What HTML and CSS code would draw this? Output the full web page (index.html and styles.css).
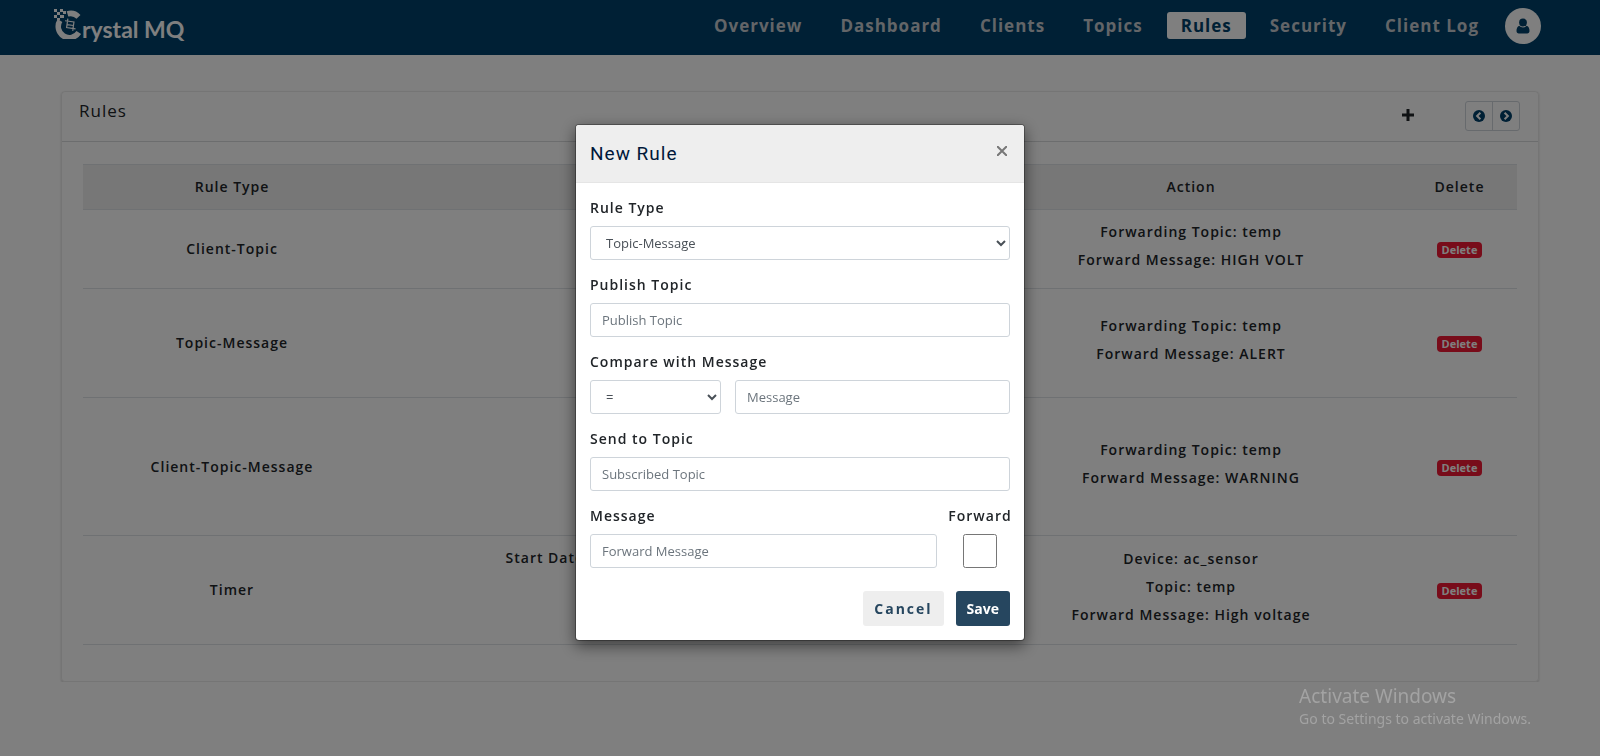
FILE: index.html
```html
<!DOCTYPE html>
<html lang="en">
<head>
<meta charset="utf-8">
<title>Crystal MQ - Rules</title>
<link rel="stylesheet" href="styles.css">
</head>
<body>
<header class="topbar">
  <a class="brand" href="#" aria-label="Crystal MQ">
    <svg class="brand-mark" viewBox="0 0 28 30" aria-hidden="true">
      <path d="M13.500 4.900A11 11 0 0 1 24.500 7.800" fill="none" stroke="#fff" stroke-width="5.500"/>
      <path d="M6 11.500A11 11 0 0 0 24.800 23.500" fill="none" stroke="#fff" stroke-width="5.500"/>
      <path d="M0 0h3v3H0zM6 0h3v3H6zM3 3h3v3H3zM9 2h3v3H9zM0 6h3v3H0zM6 6h4v3H6zM3 9h3v2H3z" fill="#fff"/>
      <path d="M13 10v9h9M10.500 12.500h9v9M13 16h6.500" fill="none" stroke="#fff" stroke-width="1.200" transform="rotate(8 16 16)"/>
    </svg>
    <span class="brand-name">rystal MQ</span>
  </a>
  <nav class="nav">
    <a href="#">Overview</a>
    <a href="#">Dashboard</a>
    <a href="#">Clients</a>
    <a href="#">Topics</a>
    <a href="#" class="active">Rules</a>
    <a href="#">Security</a>
    <a href="#">Client Log</a>
  </nav>
  <button class="avatar" type="button" aria-label="Account">
    <svg viewBox="0 0 14 16" aria-hidden="true"><circle cx="7" cy="4.500" r="3.900"/><path d="M3.300 7.800C1.200 8.500.5 10.500.5 13c0 1.600.9 2.500 2.300 2.500h8.400c1.400 0 2.300-.9 2.300-2.500 0-2.500-.7-4.500-2.800-5.200C9.700 8.900 8.400 9.400 7 9.400s-2.700-.5-3.700-1.600z"/></svg>
  </button>
</header>

<main class="card">
  <div class="card-head">
    <h1>Rules</h1>
    <button class="add" type="button" aria-label="Add rule">
      <svg viewBox="0 0 12 12" aria-hidden="true"><path d="M4.500 0h3v4.500H12v3H7.500V12h-3V7.500H0v-3h4.500z"/></svg>
    </button>
    <div class="pager">
      <button type="button" aria-label="Previous"><svg viewBox="0 0 12 12" aria-hidden="true"><circle cx="6" cy="6" r="6"/><path d="M7.400 2.700L4.100 6l3.300 3.300"/></svg></button>
      <button type="button" aria-label="Next"><svg viewBox="0 0 12 12" aria-hidden="true"><circle cx="6" cy="6" r="6"/><path d="M4.600 2.700L7.900 6 4.600 9.300"/></svg></button>
    </div>
  </div>
  <div class="card-body">
    <table class="rules">
      <colgroup><col class="col-type"><col><col class="col-action"><col class="col-delete"></colgroup>
      <thead>
        <tr><th>Rule Type</th><th>Condition</th><th>Action</th><th>Delete</th></tr>
      </thead>
      <tbody>
        <tr class="lines-2"><td>Client-Topic</td><td></td><td class="detail"><p>Forwarding Topic: temp</p><p>Forward Message: HIGH VOLT</p></td><td><button class="badge" type="button">Delete</button></td></tr>
        <tr class="lines-3"><td>Topic-Message</td><td></td><td class="detail"><p>Forwarding Topic: temp</p><p>Forward Message: ALERT</p></td><td><button class="badge" type="button">Delete</button></td></tr>
        <tr class="lines-4"><td>Client-Topic-Message</td><td></td><td class="detail"><p>Forwarding Topic: temp</p><p>Forward Message: WARNING</p></td><td><button class="badge" type="button">Delete</button></td></tr>
        <tr class="lines-3"><td>Timer</td><td class="detail top"><p>Start Date: 2020-02-01 – End Date: 2020-02-28</p></td><td class="detail"><p>Device: ac_sensor</p><p>Topic: temp</p><p>Forward Message: High voltage</p></td><td><button class="badge" type="button">Delete</button></td></tr>
      </tbody>
    </table>
  </div>
</main>

<div class="backdrop">
  <form class="modal" role="dialog" aria-labelledby="modal-title">
    <div class="modal-head">
      <h2 id="modal-title">New Rule</h2>
      <button class="close" type="button" aria-label="Close">
        <svg viewBox="0 0 10 10" aria-hidden="true"><path d="M0 0l10 10M10 0L0 10"/></svg>
      </button>
    </div>
    <div class="modal-body">
      <div class="field">
        <label for="rule-type">Rule Type</label>
        <select id="rule-type" class="control"><option>Topic-Message</option></select>
      </div>
      <div class="field">
        <label for="publish">Publish Topic</label>
        <input id="publish" class="control" type="text" placeholder="Publish Topic">
      </div>
      <div class="field">
        <label for="compare">Compare with Message</label>
        <div class="compare">
          <select id="compare" class="control"><option>=</option></select>
          <input class="control" type="text" placeholder="Message" aria-label="Message to compare">
        </div>
      </div>
      <div class="field">
        <label for="send">Send to Topic</label>
        <input id="send" class="control" type="text" placeholder="Subscribed Topic">
      </div>
      <div class="forward-row">
        <div class="field">
          <label for="message">Message</label>
          <input id="message" class="control" type="text" placeholder="Forward Message">
        </div>
        <div class="field check-field">
          <label for="forward">Forward</label>
          <input id="forward" class="check" type="checkbox">
        </div>
      </div>
      <div class="actions">
        <button class="btn cancel" type="button">Cancel</button>
        <button class="btn save" type="button">Save</button>
      </div>
    </div>
  </form>
</div>

<aside class="watermark">
  <p class="watermark-title">Activate Windows</p>
  <p>Go to Settings to activate Windows.</p>
</aside>
</body>
</html>
```
FILE: styles.css
```css
* { box-sizing: border-box; }

body {
  margin: 0;
  background: #fff;
  color: #212529;
  font-family: "Open Sans", "Noto Sans", sans-serif;
  font-size: 14px;
  line-height: 21px;
}

h1, h2, p { margin: 0; font-weight: 400; }
button { padding: 0; border: 0; background: none; font-family: inherit; cursor: pointer; }
svg { display: block; }

/* Top bar */
.topbar {
  display: flex;
  align-items: center;
  min-height: 55px;
  padding: 0 59px 4px 54px;
  background: #00416a;
}
.brand { display: flex; color: #fff; text-decoration: none; }
.brand-mark { width: 28px; height: 30px; }
.brand-name { height: 34px; font-family: Lato, sans-serif; font-size: 23px; line-height: 40px; font-weight: 700; }
.nav { display: flex; gap: 10px; margin-left: auto; margin-right: 12px; }
.nav a {
  padding: 0 14px;
  border-radius: 3px;
  color: #c6cbd0;
  font-size: 17px;
  line-height: 27px;
  font-weight: 700;
  letter-spacing: 1px;
  text-decoration: none;
}
.nav .active { background: #fff; color: #00416a; }
.avatar {
  display: flex;
  align-items: center;
  justify-content: center;
  width: 36px;
  height: 36px;
  border-radius: 50%;
  background: #fff;
}
.avatar svg { width: 14px; height: 16px; fill: #00416a; }

/* Rules card */
.card {
  margin: 36px 61px 0;
  border: 1px solid rgba(0, 0, 0, .08);
  border-radius: 4px;
  box-shadow: 0 1px 2px rgba(0, 0, 0, .2);
}
.card-head {
  display: flex;
  align-items: flex-start;
  padding: 9px 18px 10px 17px;
  border-bottom: 1px solid #d8dadc;
}
.card-head h1 { margin-right: auto; font-size: 17px; line-height: 20px; letter-spacing: 1px; }
.add { padding: 8px 0; margin-right: 51px; }
.add svg { width: 12px; height: 12px; fill: #212529; }
.pager { display: flex; border: 1px solid #ced4da; border-radius: 3px; }
.pager button { padding: 8px 7px; }
.pager button + button { border-left: 1px solid #ced4da; }
.pager svg { width: 12px; height: 12px; fill: #00416a; }
.pager path { fill: none; stroke: #fff; stroke-width: 2; }
.card-body { padding: 22px 21px 36px; }

.rules { width: 100%; border-collapse: collapse; table-layout: fixed; text-align: center; font-weight: 600; letter-spacing: 1px; }
.rules p { font-weight: 600; line-height: 28px; white-space: nowrap; }
.rules th { padding: 11px 12px 12px; background: #eee; border-top: 1px solid #dee2e6; border-bottom: 1px solid #dee2e6; font-weight: 600; }
.rules td { padding: 10px 0 11px; border-bottom: 1px solid #dee2e6; }
.rules .detail { padding: 8px 0 14px; }
.rules .top { vertical-align: top; }
.col-type { width: 298px; }
.col-action { width: 422px; }
.col-delete { width: 115px; }
.lines-2 { height: 79px; }
.lines-3 { height: 109px; }
.lines-4 { height: 138px; }
.badge {
  padding: 0 5px;
  border-radius: 4px;
  background: #f01834;
  color: #fff;
  font-size: 11px;
  line-height: 16px;
  font-weight: 700;
  vertical-align: middle;
}

/* Dialog */
.backdrop { position: fixed; inset: 0; padding: 124px 16px 0; background: rgba(0, 0, 0, .5); overflow: auto; }
.modal {
  max-width: 450px;
  margin: 0 auto;
  border: 1px solid rgba(0, 0, 0, .3);
  border-radius: 4px;
  background: #fff;
  background-clip: padding-box;
  box-shadow: 0 5px 15px rgba(0, 0, 0, .5);
}
.modal-head {
  display: flex;
  align-items: flex-start;
  justify-content: space-between;
  padding: 15px 17px 14px 14px;
  border-bottom: 1px solid #e5e5e5;
  border-radius: 3px 3px 0 0;
  background: #eee;
}
.modal-head h2 { color: #00183a; font-family: Roboto, sans-serif; font-size: 19px; line-height: 28px; letter-spacing: 1px; }
.close { padding: 6px 0; }
.close svg { width: 10px; height: 10px; fill: none; stroke: #777; stroke-width: 2; }
.modal-body { display: flex; flex-direction: column; gap: 14px; padding: 14px; }
.field { display: flex; flex-direction: column; gap: 8px; min-width: 0; }
.field label { font-weight: 600; letter-spacing: 1px; white-space: nowrap; }
.control {
  width: 100%;
  height: 34px;
  padding: 0 11px;
  border: 1px solid #ced4da;
  border-radius: 3px;
  background: #fff;
  color: #495057;
  font-family: inherit;
  font-size: 13px;
}
.control::placeholder { color: #6c757d; }
.compare { display: grid; grid-template-columns: 131px 1fr; gap: 14px; }
.forward-row { display: grid; grid-template-columns: 1fr 60px; gap: 13px; }
.check-field { align-items: center; }
.check { width: 34px; height: 34px; margin: 0; }
.actions { display: flex; justify-content: flex-end; gap: 12px; padding-top: 9px; }
.btn { padding: 0 11px; border-radius: 3px; font-size: 14px; line-height: 35px; font-weight: 700; }
.cancel { background: #eee; color: #26465f; letter-spacing: 2px; }
.save { background: #26465f; color: #fff; }

/* System notice over the page */
.watermark { position: fixed; right: 69px; bottom: 27px; color: #a3a3a3; font-family: "Noto Sans", sans-serif; font-size: 14px; pointer-events: none; }
.watermark-title { font-size: 19px; line-height: 24px; }
```
